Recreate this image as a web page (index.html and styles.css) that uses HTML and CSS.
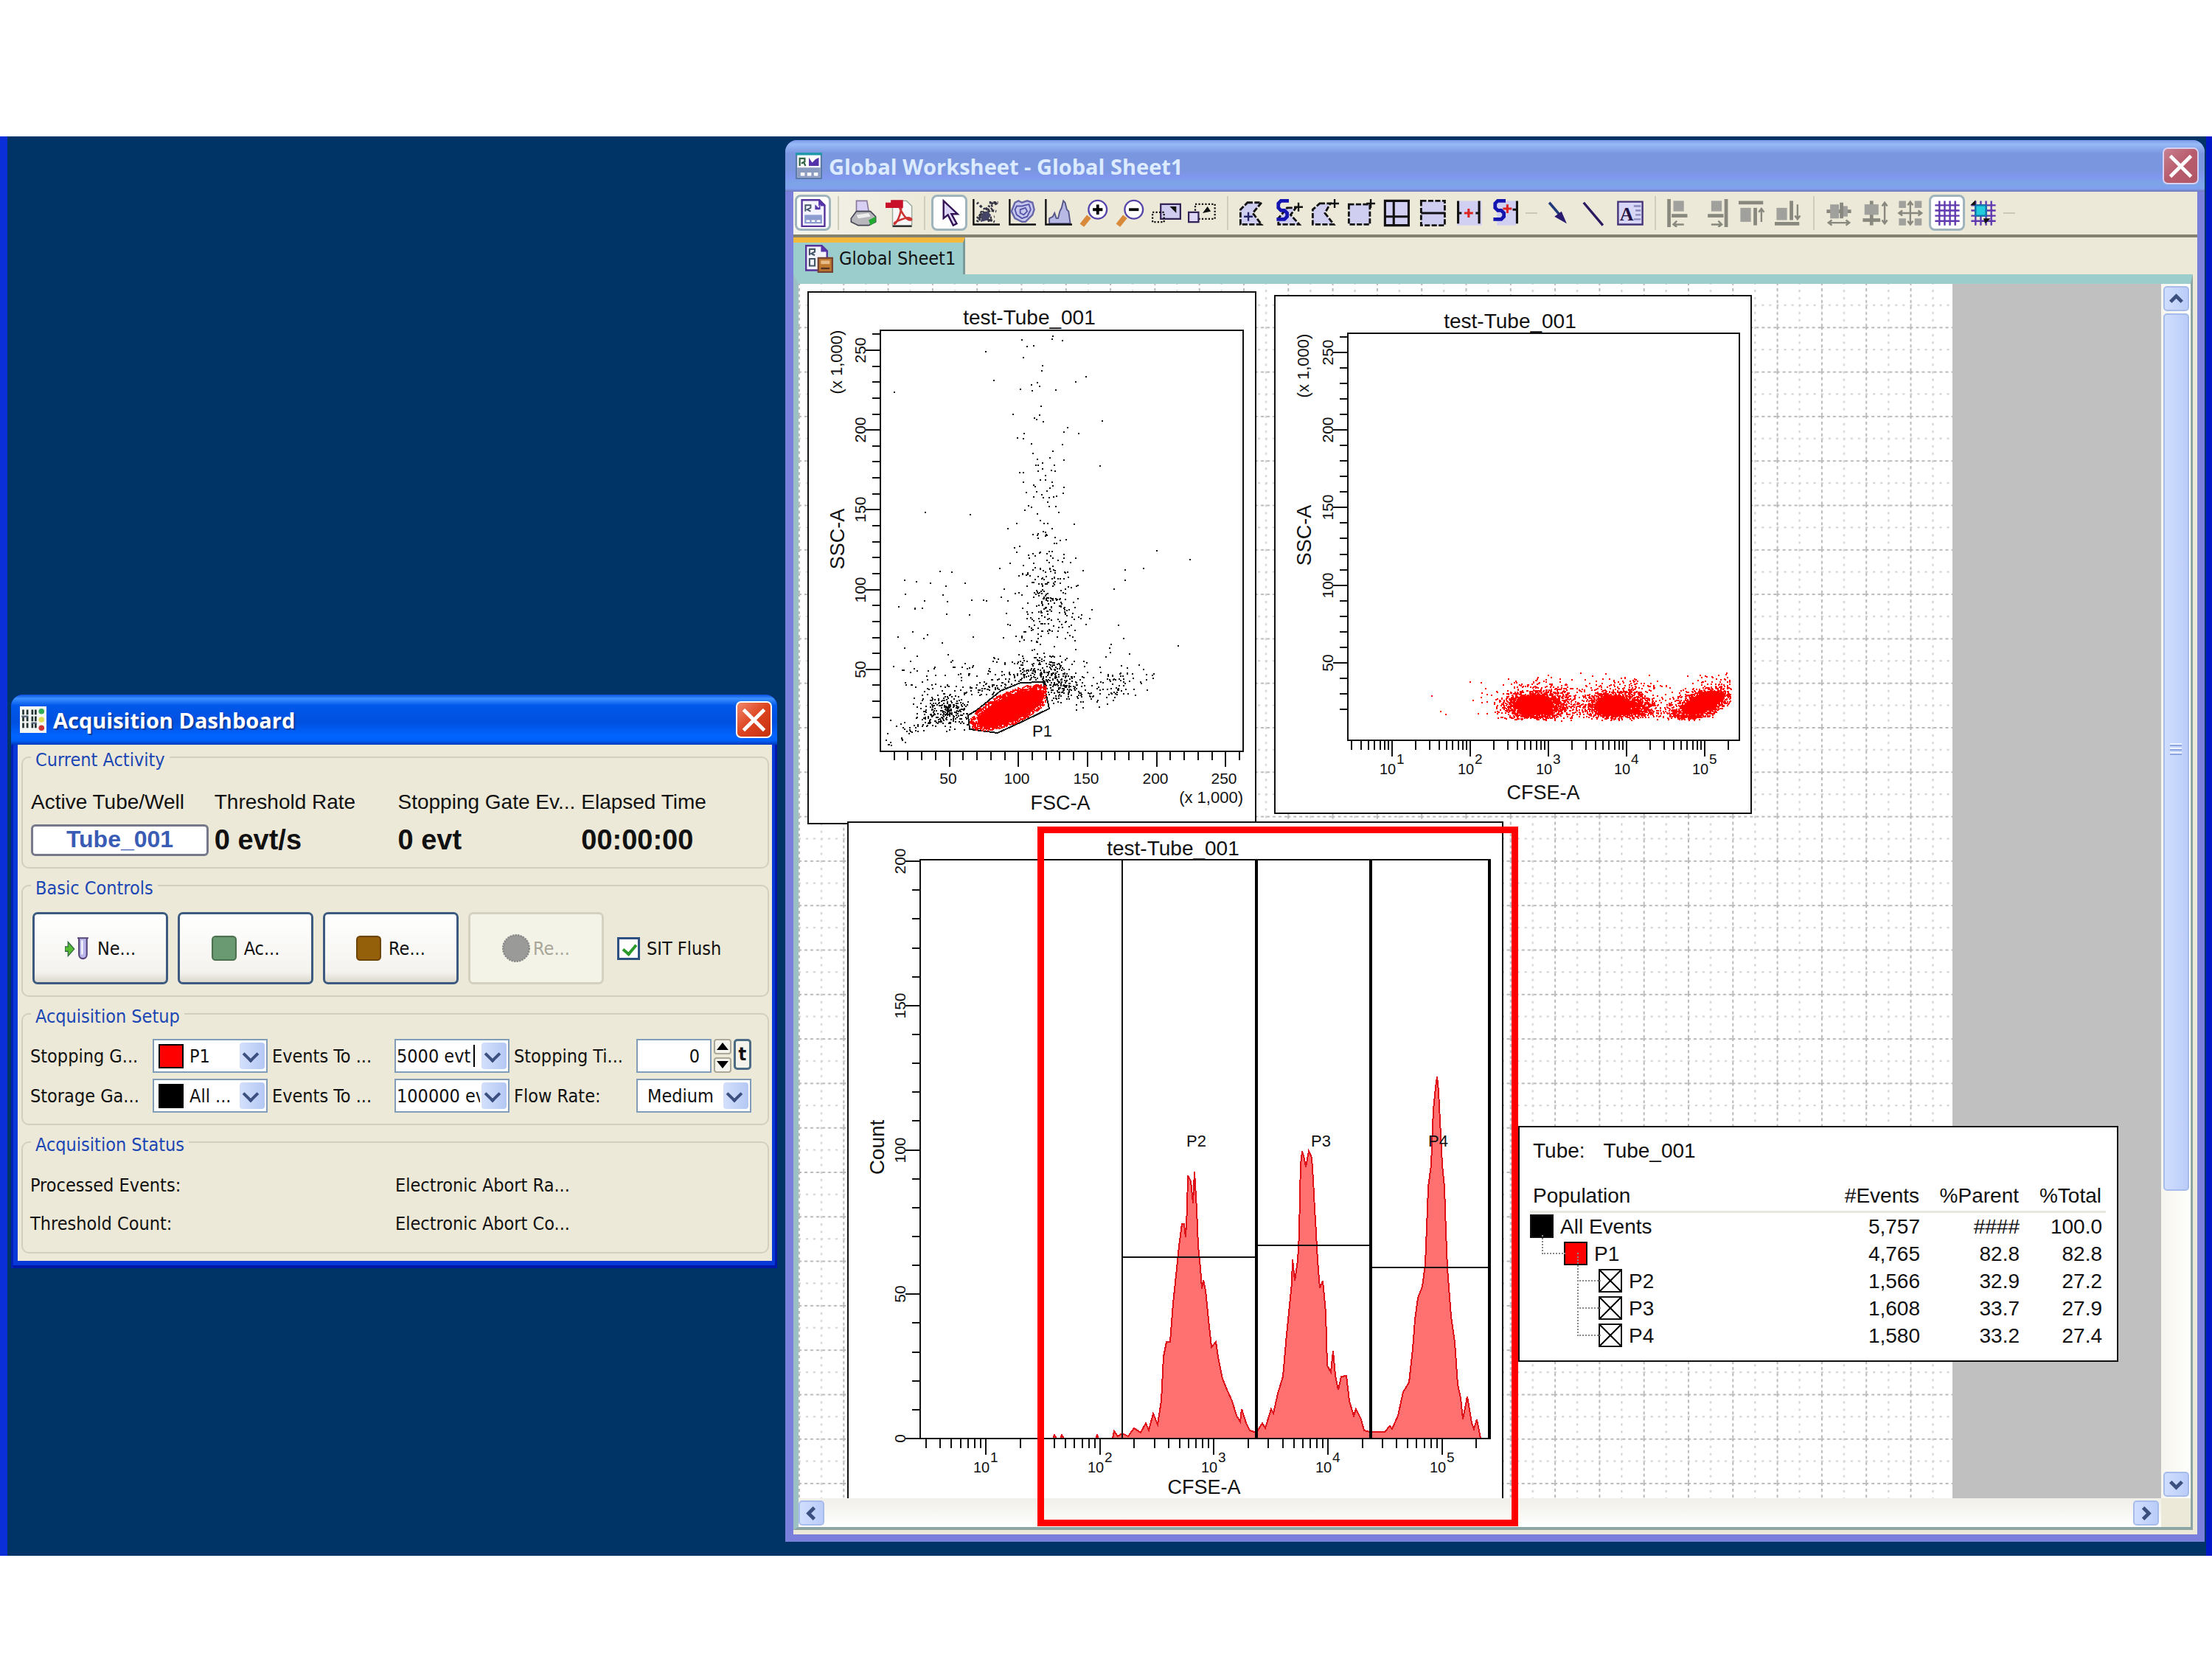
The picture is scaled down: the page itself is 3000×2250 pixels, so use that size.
FILE: index.html
```html
<!DOCTYPE html>
<html lang="en">
<head>
<meta charset="UTF-8">
<title>Global Worksheet - Global Sheet1</title>
<link rel="stylesheet" href="styles.css">
</head>
<body>

<main class="desktop">

<section class="window dashboard">
	<header class="titlebar">
		<svg class="app-icon" viewBox="0 0 16 16">
			<path fill="#f4f8f4" d="M0 0h16v16H0z" />
			<path stroke="#233" stroke-width="1.2" stroke-dasharray="3 1" fill="none" d="M2 2v12M4.500 2v12M7.500 2v12M9.500 2v12" />
			<path stroke="#567" d="M1 6h4M7 10h3" />
			<circle cx="13" cy="3" r="1.700" fill="#3a5" /><circle cx="13" cy="8" r="1.700" fill="#dd5" /><circle cx="13" cy="13" r="1.700" fill="#c33" />
		</svg>
		<h1>Acquisition Dashboard</h1>
		<button class="close" type="button" aria-label="Close"><svg viewBox="0 0 16 16"><path d="M3 3l10 10M13 3L3 13" /></svg></button>
	</header>
	<form class="client">
		<fieldset>
			<legend>Current Activity</legend>
			<dl class="activity">
				<div><dt>Active Tube/Well</dt><dd class="tube">Tube_001</dd></div>
				<div><dt>Threshold Rate</dt><dd>0 evt/s</dd></div>
				<div><dt>Stopping Gate Ev...</dt><dd>0 evt</dd></div>
				<div><dt>Elapsed Time</dt><dd>00:00:00</dd></div>
			</dl>
		</fieldset>
		<fieldset>
			<legend>Basic Controls</legend>
			<div class="controls">
				<button type="button">
					<svg viewBox="0 0 16 16"><path fill="#5b3" stroke="#364" stroke-width=".600" d="M0 7h2V4l4 4.500L2 13v-3H0z" /><path fill="#b9b6ec" stroke="#547" d="M8 1.500h7M9 2v10c0 3.500 5 3.500 5 0V2" /><path stroke="#fff" d="M11 3v9" /></svg>
					Ne...
				</button>
				<button type="button">
					<svg viewBox="0 0 16 16"><rect x=".500" y=".500" width="15" height="15" rx="2" fill="#6a9a72" stroke="#4c7250" /></svg>
					Ac...
				</button>
				<button type="button">
					<svg viewBox="0 0 16 16"><rect x=".500" y=".500" width="15" height="15" rx="2" fill="#94610a" stroke="#6e4506" /></svg>
					Re...
				</button>
				<button type="button" class="record" disabled>
					<svg viewBox="0 0 16 16"><circle cx="8" cy="8" r="7.500" fill="#9a9a98" stroke="#888" stroke-dasharray="1 .500" /></svg>
					Re...
				</button>
				<label class="check"><input type="checkbox" checked> SIT Flush</label>
			</div>
		</fieldset>
		<fieldset>
			<legend>Acquisition Setup</legend>
			<div class="setup">
				<div class="field">
					<label for="stopGate">Stopping G...</label>
					<div class="combo gate-p1"><select id="stopGate"><option>P1</option></select></div>
				</div>
				<div class="field">
					<label for="eventsRecord">Events To ...</label>
					<div class="combo caret"><input id="eventsRecord" type="text" value="5000 evt"></div>
				</div>
				<div class="field">
					<label for="stopTime">Stopping Ti...</label>
					<div class="spinner">
						<input id="stopTime" type="text" value="0">
						<span class="spin"><button type="button" aria-label="Up"></button><button type="button" aria-label="Down"></button></span>
						<button type="button" class="pin">t</button>
					</div>
				</div>
				<div class="field">
					<label for="storeGate">Storage Ga...</label>
					<div class="combo gate-all"><select id="storeGate"><option>All ...</option></select></div>
				</div>
				<div class="field">
					<label for="eventsDisplay">Events To ...</label>
					<div class="combo"><input id="eventsDisplay" type="text" value="100000 evt"></div>
				</div>
				<div class="field">
					<label for="flowRate">Flow Rate:</label>
					<div class="combo flow"><select id="flowRate"><option>Medium</option></select></div>
				</div>
			</div>
		</fieldset>
		<fieldset>
			<legend>Acquisition Status</legend>
			<div class="status">
				<span>Processed Events:</span><span>Electronic Abort Ra...</span>
				<span>Threshold Count:</span><span>Electronic Abort Co...</span>
			</div>
		</fieldset>
	</form>
</section>

<section class="window sheet">
	<header class="titlebar">
		<svg class="app-icon" viewBox="0 0 16 16">
			<path fill="#fff" stroke="#5a7aa8" d="M.500 .500h15v15H.500z" />
			<path fill="#29a" d="M0 0h16v1.500H0z" />
			<path stroke="#364" fill="none" d="M2.500 8V3.500h3v2l-2 1M5 6l1 2" /><path fill="#53a" d="M8 8V3l2 3 2-2 2-1v5z" />
			<path fill="#8c9cc0" d="M1 9h14v6H1z" /><path stroke="#fff" stroke-width="2" d="M3 13h2.500M7 13h2.500M11 13h2.500" />
		</svg>
		<h1>Global Worksheet - Global Sheet1</h1>
		<button class="close" type="button" aria-label="Close"><svg viewBox="0 0 16 16"><path d="M3 3l10 10M13 3L3 13" /></svg></button>
	</header>
	<nav class="toolbar">
		<button class="on" aria-label="Worksheet"><svg viewBox="0 0 16 16"><path fill="#f4f4ff" stroke="#539" d="M1.500 .500h10l3 3v12h-13z" /><path fill="#53a" d="M11 0v4h4zM9 6V3l2 2 1-2v3z" /><path fill="none" stroke="#456" stroke-width=".800" d="M3.500 7V3.500h3v1.500l-2 1 2 1" /><path fill="#8c9cd0" d="M3 9h10v5H3z" /><path stroke="#fff" d="M4 12.500h2M7 12.500h2M10 12.500h2" /></svg></button>
		<i></i>
		<button aria-label="Print"><svg viewBox="0 0 16 16"><path fill="#d8d0f4" stroke="#879" stroke-width=".700" d="M4 1h6l1 6H4z" /><path fill="#b8b8bc" stroke="#445" stroke-width=".700" d="M1 11l3-4h8l3 3v3l-4 2H5l-4-2z" /><path fill="#eee" d="M4 9l7-1 1 2-7 1z" /><path fill="#2a3" d="M11 12l4-2v3l-3 2z" /></svg></button>
		<button aria-label="PDF"><svg viewBox="0 0 16 16"><path fill="#f8f8f8" stroke="#9a9" stroke-width=".600" d="M4 1h8l3 3v11H4z" /><path fill="#c8102a" d="M0 2h3V.500h7V5H0z" /><path fill="none" stroke="#c33" stroke-width="1.100" d="M8 5c2 4 4 7 6 7s0-2-3-1-6 2-6 3 3-2 4-9" /><path stroke="#333" d="M4 15.500h11" /></svg></button>
		<i></i>
		<button class="on" aria-label="Select"><svg viewBox="0 0 16 16"><path fill="#ddd4f6" stroke="#315" d="M4.500 1v10l2.500-2 3 6 2-1-3-5.500h3.500z" /></svg></button>
		<button aria-label="Dot plot"><svg viewBox="0 0 16 16"><path stroke="#111" fill="none" d="M1 0v14.500h15" /><path stroke="#334" stroke-width="1.400" stroke-dasharray="1 1.300 1.500 .800" d="M3 2l3 3M10 2h5M11 4l4-2M3 11l9-9M4 12l8-7M4 9l9 4M6 12l7-2M5 7l5 5M9 6l5 1M3 13l4-6M7 5l3 8" /><path fill="#446" d="M6 8l3-1 2 2-2 3-4 1z" /></svg></button>
		<button aria-label="Contour plot"><svg viewBox="0 0 16 16"><path stroke="#111" fill="none" d="M1 0v14.500h15" /><path fill="#c8c8ee" stroke="#66a" d="M4 2l2-1 2 1 3-1 3 1 1 4-1 3-4 4H8L4 11 2 7z" /><path fill="none" stroke="#55a" stroke-width=".800" d="M5 4l3 0 4-1 1 3-2 4-3 1-3-2-1-3zM7 6l3-1 1 2-2 2-2-1z" /></svg></button>
		<button aria-label="Histogram"><svg viewBox="0 0 16 16"><path fill="#b9b9e6" stroke="#558" stroke-width=".800" d="M3 14v-3l2-1 1-2 1 3h1l1-4 1-2 1-4 1 1 1 4 1 1 1 7z" /><path stroke="#111" fill="none" d="M1 0v14.500h15" /></svg></button>
		<button aria-label="Zoom in"><svg viewBox="0 0 16 16"><path stroke="#d88a3a" stroke-width="3" d="M1 15l4-5" /><circle cx="10" cy="6" r="5.200" fill="#fff" stroke="#54a" /><path stroke="#000" stroke-width="1.600" d="M7.200 6h5.600M10 3.200v5.600" /></svg></button>
		<button aria-label="Zoom out"><svg viewBox="0 0 16 16"><path stroke="#d88a3a" stroke-width="3" d="M1 15l4-5" /><circle cx="10" cy="6" r="5.200" fill="#fff" stroke="#54a" /><path stroke="#000" stroke-width="1.600" d="M7.200 6h5.600" /></svg></button>
		<button aria-label="Enlarge"><svg viewBox="0 0 18 16"><path fill="#d0ccf0" stroke="#325" d="M5.500 2.500h12v9h-12z" /><path fill="none" stroke="#111" stroke-dasharray="1 1" d="M.500 7.500h7v6h-7z" /><path fill="#111" d="M11 4h4v4z" /></svg></button>
		<button aria-label="Reduce"><svg viewBox="0 0 18 16"><path fill="none" stroke="#111" stroke-dasharray="1 1" d="M4.500 2.500h12v9h-12z" /><path fill="#ded8f6" stroke="#325" d="M.500 7.500h6v6h-6z" /><path fill="#111" d="M9 8l3-4 2 3z" /></svg></button>
		<i></i>
		<button aria-label="Autopolygon gate"><svg viewBox="0 0 16 16"><path class="gate" d="M5 2h8L8 8l5 6.500H1V6z" /><path stroke="#226" d="M3 10h5M5.500 7.500v5" /></svg></button>
		<button aria-label="Snap-to gate"><svg viewBox="0 0 16 16"><path class="gate" d="M7 5h5L9 9l5 5.500H2V11z" /><path class="snap" d="M8 1H3.500L2 2.500V5l1.500 1.500h2L7 8v2l-1.500 1.500H1" /><path stroke="#111" d="M11 4.500h5M13.500 2v5" /></svg></button>
		<button aria-label="Polygon gate"><svg viewBox="0 0 16 16"><path class="gate" d="M5 2.500h6L8 8l5 6.500H1V6z" /><path stroke="#111" d="M11 2.500h5M13.500 0v5" /></svg></button>
		<button aria-label="Rectangle gate"><svg viewBox="0 0 16 16"><path class="gate" d="M1 3h12v11.500H1z" /><path stroke="#111" d="M11 2.500h5M13.500 0v5" /></svg></button>
		<button aria-label="Quadrant gate"><svg viewBox="0 0 16 16"><path fill="#d2d0f2" stroke="#111" stroke-width="1.300" d="M1 1h13.500v14H1zM6 1v14M1 10h13.500" /></svg></button>
		<button aria-label="Interval gate"><svg viewBox="0 0 16 16"><path class="gate" d="M1 1h13.500v14H1z" /><path stroke="#111" stroke-width="1.300" d="M1 8h13.500" /></svg></button>
		<button aria-label="Vertical interval"><svg viewBox="0 0 16 16"><path fill="#d2d0f2" d="M1 1h14v14H1z" /><path fill="none" stroke="#111" stroke-width="1.300" d="M1.500 1v13M13.500 1v13M1.500 8h2M11.500 8h2" /><path stroke="#d22" stroke-width="1.300" d="M5 8h5M7.500 5.500v5" /></svg></button>
		<button aria-label="Snap-to interval"><svg viewBox="0 0 16 16"><path fill="#d2d0f2" d="M3 1h11v14H3z" /><path class="snap" d="M8 1H3.500L2 2.500V5l1.500 1.500h2L7 8v2l-1.500 1.500H1" /><path fill="none" stroke="#111" stroke-width="1.300" d="M14.500 1v13M12 6h2" /><path stroke="#d22" stroke-width="1.300" d="M6.500 5.500h5M9 3v5" /></svg></button>
		<i class="more"></i>
		<button aria-label="Arrow"><svg viewBox="0 0 16 16"><path stroke="#213a7a" stroke-width="1.500" d="M3 2l6 7" /><path fill="#2a1a70" d="M13 14l-7-4 4-3z" /></svg></button>
		<button aria-label="Line"><svg viewBox="0 0 16 16"><path stroke="#2a1a60" stroke-width="1.400" d="M2 2l11 13" /></svg></button>
		<button aria-label="Text"><svg viewBox="0 0 16 16"><path fill="#d8d6f6" stroke="#437" d="M1 1.500h14v13H1z" /><path stroke="#88b" d="M10 4h4M11 6.500h3M11 9h3M10 11.500h4" /><text x="2" y="12" class="icon-a">A</text></svg></button>
		<i></i>
		<button aria-label="Align left"><svg viewBox="0 0 16 16"><path class="bar" d="M1.500 0v16" /><path class="box" d="M4 1h6v6H4z" /><path class="bar" d="M3 9.500h9" /><path class="arr" d="M4 14.500h6M6 12.500l-2 2 2 1.500" /></svg></button>
		<button aria-label="Align right"><svg viewBox="0 0 16 16"><path class="bar" d="M13.500 0v16" /><path class="box" d="M5 1h6v6H5z" /><path class="bar" d="M3 9.500h9" /><path class="arr" d="M5 14.500h6M9 12.500l2 2-2 1.500" /></svg></button>
		<button aria-label="Align top"><svg viewBox="0 0 16 16"><path class="bar" d="M0 2h14" /><path class="box" d="M1 5h6v8H1z" /><path class="bar" d="M9.500 5v10" /><path class="arr" d="M13 13V6M11.500 7.500l1.500-2 1.500 2" /></svg></button>
		<button aria-label="Align bottom"><svg viewBox="0 0 16 16"><path class="bar" d="M0 14h14" /><path class="box" d="M1 5h6v7H1z" /><path class="bar" d="M9.500 1v11" /><path class="arr" d="M13 3v8M11.500 9.500l1.500 2 1.500-2" /></svg></button>
		<i></i>
		<button aria-label="Distribute horizontally"><svg viewBox="0 0 16 16"><path class="bar" d="M1 7h14" /><path class="box" d="M3 3h5v8H3zM10 4h3v6h-3z" /><path class="bar" d="M9.500 2v9" /><path class="arr" d="M2 13.500h12M4 12l-2 1.500L4 15M12 12l2 1.500-2 1.500" /></svg></button>
		<button aria-label="Distribute vertically"><svg viewBox="0 0 16 16"><path class="bar" d="M6 1v14" /><path class="box" d="M2 3h8v6H2z" /><path class="bar" d="M1 12h10" /><path class="arr" d="M13.500 2v12M12 4l1.500-2L15 4M12 12l1.500 2 1.500-2" /></svg></button>
		<button aria-label="Same size"><svg viewBox="0 0 16 16"><path class="box" d="M1 1h4v4H1zM10 1h4v4h-4zM1 11h4v4H1zM10 11h4v4h-4z" /><path class="arr" d="M7.500 2v12M1 8h13M6 3.500L7.500 1.500 9 3.500M6 12.500l1.500 2 1.500-2M3 6.500L1 8l2 1.500M12 6.500L14 8l-2 1.500" /></svg></button>
		<button class="on" aria-label="Show grid"><svg viewBox="0 0 16 16"><path class="mesh" d="M3.500 1v14M6.500 1v14M9.500 1v14M12.500 1v14M1 3.500h14M1 6.500h14M1 9.500h14M1 12.500h14" /></svg></button>
		<button aria-label="Snap to grid"><svg viewBox="0 0 16 16"><path class="mesh" d="M3.500 1v14M6.500 1v14M9.500 1v14M12.500 1v14M1 3.500h14M1 6.500h14M1 9.500h14M1 12.500h14" /><path fill="#2cd" stroke="#17a" d="M3.500 3.500h6v6h-6z" /><path fill="#111" d="M.500 3.500l3-3v3zM8 11h4l-3 3z" /></svg></button>
		<i class="more"></i>
	</nav>
	<div class="tabs">
		<a href="#sheet1" class="tab">
			<svg viewBox="0 0 16 16"><path fill="#f4f4ff" stroke="#539" d="M.500 .500h9l3 3v11H.500z" /><path fill="#53a" d="M9 0v4h4z" /><path fill="none" stroke="#456" stroke-width=".900" d="M2.500 6V2.500h3v1.500l-2 1 2 1M2.500 8h3v4h-3z" /><path fill="#c07a30" stroke="#743" d="M7.500 7.500h8v8h-8z" /><path fill="#e8bc88" d="M9 9h5v2H9z" /><path fill="#532" d="M9 13h5v1H9z" /></svg>
			Global Sheet1
		</a>
	</div>
	<div class="pane" id="sheet1">
		<div class="canvas">
			<svg class="paper">
				<defs>
					<pattern id="grid" width="60.3" height="60.3" y="-2" patternUnits="userSpaceOnUse">
						<path stroke="#b8b8b8" stroke-width="2" stroke-dasharray="4 4" d="M1 0v60.300M0 1h60.300" />
						<path stroke="#ccc" stroke-width="2" stroke-dasharray="3 7" d="M31 0v60.300M0 31h60.300" />
					</pattern>
				</defs>
				<rect width="100%" height="100%" fill="url(#grid)" />
			</svg>
			<svg class="plot" id="scatter" viewBox="1095 395 609 723"></svg>
			<svg class="plot" id="cfse" viewBox="1728 400 648 704"></svg>
			<svg class="plot" id="histogram" viewBox="1149 1114 890 930"></svg>
			<div class="stats">
				<p><span>Tube:</span> <span>Tube_001</span></p>
				<table>
					<thead>
						<tr><th>Population</th><th>#Events</th><th>%Parent</th><th>%Total</th></tr>
					</thead>
					<tbody>
						<tr><td class="root"><b class="black"></b>All Events</td><td>5,757</td><td>####</td><td>100.0</td></tr>
						<tr><td class="child"><b class="red"></b>P1</td><td>4,765</td><td>82.8</td><td>82.8</td></tr>
						<tr><td class="leaf"><b></b>P2</td><td>1,566</td><td>32.9</td><td>27.2</td></tr>
						<tr><td class="leaf"><b></b>P3</td><td>1,608</td><td>33.7</td><td>27.9</td></tr>
						<tr><td class="leaf"><b></b>P4</td><td>1,580</td><td>33.2</td><td>27.4</td></tr>
					</tbody>
				</table>
			</div>
		</div>
		<div class="vscroll">
			<button aria-label="Scroll up"><svg viewBox="0 0 16 16"><path d="M4 10l4-4 4 4" /></svg></button>
			<div class="thumb"></div>
			<button aria-label="Scroll down"><svg viewBox="0 0 16 16"><path d="M4 6l4 4 4-4" /></svg></button>
		</div>
		<div class="hscroll">
			<button aria-label="Scroll left"><svg viewBox="0 0 16 16"><path d="M10 4L6 8l4 4" /></svg></button>
			<button aria-label="Scroll right"><svg viewBox="0 0 16 16"><path d="M6 4l4 4-4 4" /></svg></button>
		</div>
		<div class="highlight"></div>
	</div>
</section>

</main>

<script src="plots.js"></script>
</body>
</html>
```
FILE: styles.css
```css
* {
	box-sizing: border-box;
}
html, body {
	height: 100%;
	margin: 0;
}
body {
	background: #FFF;
	color: #111;
	display: flex;
	flex-direction: column;
	font: 25px "DejaVu Sans Condensed", "DejaVu Sans", sans-serif;
	padding: 185px 0 140px;
}
button, input, select {
	color: inherit;
	font: inherit;
	margin: 0;
}
svg {
	display: block;
	fill: none;
}
.desktop {
	background: #036;
	border-left: 10px solid #0A2FD8;
	border-right: 8px solid #0018C8;
	flex: 1;
	position: relative;
}

/* Windows */
.window {
	border-radius: 16px 16px 0 0;
	display: flex;
	flex-direction: column;
	position: absolute;
}
.dashboard {
	background: #0838D8;
	box-shadow: inset 3px 0 #0020B8, inset -3px 0 #0018A8, inset 0 -4px #0018A8;
	left: 5px;
	padding: 0 7px 10px 9px;
	top: 757px;
	width: 1039px;
}
.sheet {
	background: #7A7FDC;
	bottom: 19px;
	left: 1055px;
	padding: 0 10px 10px 11px;
	right: 2px;
	top: 5px;
}
.titlebar {
	align-items: center;
	color: #FFF;
	display: flex;
	flex: none;
	gap: 9px;
	height: 68px;
}
.dashboard .titlebar {
	background: linear-gradient(#0A50E0, #3C90FF 8%, #0058EA 22%, #0050E0 55%, #0064FF 82%, #0060F8 92%, #0038B8);
	border-radius: 16px 16px 0 0;
	margin: 0 -7px 0 -9px;
	padding: 0 7px 0 12px;
}
.sheet .titlebar {
	background: linear-gradient(#7A9AE8, #98BAF8 8%, #7A96DF 26%, #7A96DF 58%, #8096EE 70%, #7CA4E6 84%, #80A0F0 94%, #7078B8);
	border-radius: 16px 16px 0 0;
	color: #DCEBFF;
	height: 70px;
	margin: 0 -10px 0 -11px;
	padding: 0 8px 0 14px;
}
.titlebar h1 {
	flex: 1;
	font: bold 29px "Open Sans", "Noto Sans", sans-serif;
	margin: 0;
	text-shadow: 2px 2px 1px #0A3A9A;
}
.sheet h1 {
	text-shadow: none;
}
.app-icon {
	height: 36px;
	width: 36px;
}
.close {
	background: linear-gradient(135deg, #F0876A, #DD4420 50%, #C43010);
	border: 2px solid #FFF;
	border-radius: 7px;
	height: 50px;
	padding: 0;
	width: 49px;
}
.sheet .close {
	background: linear-gradient(135deg, #C88090, #B85C6C 50%, #B05868);
	border-color: #D8D0F0;
}
.close path {
	stroke: #FFF;
	stroke-width: 1.7;
}

/* Dashboard */
.client {
	background: #ECE9D8;
	padding: 1px 4px 10px 5px;
}
fieldset {
	border: 2px solid #D2CFBC;
	border-radius: 10px;
	height: 167px;
	margin: 0 0 7px;
	min-width: 0;
	padding: 0 10px 0 11px;
}
fieldset:last-child {
	margin: 0;
}
legend {
	color: #1B46B4;
	line-height: 24px;
	padding: 8px 6px 0;
}
.activity {
	display: grid;
	font-family: "Liberation Sans", sans-serif;
	font-size: 28px;
	grid-template-columns: repeat(4, 1fr);
	margin: 0 -6px 0 0;
	padding-top: 28px;
	white-space: nowrap;
}
.activity dt {
	line-height: 34px;
	margin-bottom: 13px;
}
.activity dd {
	font-size: 38px;
	font-weight: bold;
	line-height: 43px;
	margin: 0;
}
.activity .tube {
	background: #FFF;
	border: 3px solid #77788C;
	border-radius: 6px;
	color: #3A5CB4;
	font-size: 32px;
	line-height: 34px;
	height: 43px;
	text-align: center;
	width: 241px;
}
.controls {
	align-items: center;
	display: flex;
	gap: 13px;
	padding: 20px 0 0 2px;
}
.controls button {
	align-items: center;
	background: linear-gradient(#FFF, #F4F3EE 85%, #DCD8CC);
	border: 3px solid #3C5A80;
	border-radius: 7px;
	display: flex;
	gap: 10px;
	height: 98px;
	justify-content: center;
	padding: 0;
	width: 184px;
}
.controls button:disabled {
	background: #F4F3E8;
	border-color: #D4D1C0;
	color: #A8A698;
}
.controls svg {
	height: 34px;
	width: 34px;
}
.controls .record {
	gap: 4px;
}
.controls .record svg {
	height: 38px;
	width: 38px;
}
.check {
	align-items: center;
	display: flex;
	gap: 9px;
	margin-left: 5px;
}
.check input {
	appearance: none;
	background: #FFF;
	border: 3px solid #2C5080;
	height: 31px;
	position: relative;
	width: 31px;
}
.check input:checked::after {
	border: solid #2A9A2A;
	border-width: 0 4px 4px 0;
	content: "";
	height: 14px;
	left: 8px;
	position: absolute;
	top: 3px;
	transform: rotate(40deg);
	width: 8px;
}
.setup {
	display: grid;
	gap: 8px 6px;
	grid-template-columns: repeat(3, 322px);
	margin-left: -1px;
	padding-top: 18px;
}
.field {
	align-items: center;
	display: flex;
	white-space: nowrap;
}
.field label {
	flex: 1;
}
.combo, .spinner {
	height: 46px;
	position: relative;
	width: 156px;
}
.combo select, .combo input, .spinner input {
	appearance: none;
	background: #FFF;
	border: 2px solid #7F9DB9;
	border-radius: 0;
	height: 46px;
	outline: 0;
	padding: 0 38px 0 1px;
	width: 100%;
}
.combo::after {
	background: linear-gradient(90deg, #D4E0FC, #B4C8F4);
	border-radius: 4px;
	bottom: 5px;
	content: "";
	position: absolute;
	right: 4px;
	top: 5px;
	width: 34px;
}
/* Arrow of the drop-down */
.combo::before {
	border: solid #3C5080;
	border-width: 0 4px 4px 0;
	content: "";
	height: 12px;
	position: absolute;
	right: 15px;
	top: 13px;
	transform: rotate(45deg);
	width: 12px;
	z-index: 1;
}
.gate-p1 select, .gate-all select {
	background: linear-gradient(#000, #000) 6px 5px / 34px 33px no-repeat #FFF;
	padding-left: 48px;
	padding-right: 0;
}
.gate-p1 select {
	background: linear-gradient(#F00, #F00) 8px 7px / 30px 29px no-repeat, linear-gradient(#000, #000) 6px 5px / 34px 33px no-repeat #FFF;
}
.flow select {
	padding: 0 0 0 13px;
}
.caret input {
	background: linear-gradient(#000, #000) 105px 6px / 2px 30px no-repeat #FFF;
}
.spinner {
	display: flex;
	gap: 3px;
}
.spinner input {
	flex: 1;
	min-width: 0;
	padding: 0 14px 0 0;
	text-align: right;
}
.spin {
	display: grid;
	gap: 4px;
	width: 24px;
}
.spin button {
	background: #F4F3EC;
	border: 2px solid #AAA898;
	border-radius: 4px;
	padding: 0;
	position: relative;
}
.spin button::after {
	border: 8px solid transparent;
	border-bottom: 10px solid #000;
	border-top: 0;
	content: "";
	left: 2px;
	position: absolute;
	top: 3px;
}
.spin button + button::after {
	border-bottom: 0;
	border-top: 10px solid #000;
}
.pin {
	background: #F4F3EC;
	border: 3px solid #4C6C84;
	border-radius: 5px;
	height: 42px;
	line-height: 30px;
	padding: 0;
	width: 24px;
}
.spinner .pin {
	font-weight: bold;
}
.status {
	display: grid;
	grid-template-columns: 1fr 1fr;
	line-height: 52px;
	margin-left: -1px;
	padding-top: 17px;
}

/* Worksheet */
.toolbar {
	align-items: center;
	background: linear-gradient(90deg, #F4F3EA, #ECE9D8 10%);
	border-bottom: 4px solid #85816F;
	display: flex;
	flex: none;
	height: 62px;
	padding: 0 0 1px 2px;
}
.toolbar button {
	align-items: center;
	background: none;
	border: 3px solid transparent;
	border-radius: 8px;
	display: flex;
	flex: none;
	height: 49px;
	justify-content: center;
	padding: 0;
	width: 49px;
}
.toolbar .on {
	background: #FFF;
	border-color: #9FB4BC;
}
.toolbar svg {
	height: 38px;
	width: 40px;
}
.toolbar i {
	border-left: 2px solid #D0CDBC;
	flex: none;
	height: 46px;
	margin: 0 8px 0 9px;
}
.toolbar .more {
	border: 0;
	border-top: 2px solid #CCC9B8;
	height: 2px;
	margin: 0 3px;
	width: 16px;
}
.gate {
	fill: #CFCDF0;
	stroke: #111;
	stroke-dasharray: 3 1;
	stroke-width: 1.2;
}
.snap {
	stroke: #1414B0;
	stroke-width: 2;
}
.icon-a {
	fill: #214;
	font: bold 11px "Liberation Serif", serif;
}
.bar {
	stroke: #88887F;
	stroke-width: 2;
}
.box {
	fill: #A0A09C;
}
.arr {
	stroke: #88887F;
}
.mesh {
	stroke: #6038B0;
}
.tabs {
	background: #ECE9D8;
	flex: none;
	height: 50px;
}
.tab {
	align-items: center;
	background: #9CCDCD;
	border-right: 3px solid #7A9A9A;
	border-top: 7px solid #F4B83C;
	color: #111;
	display: flex;
	gap: 8px;
	height: 50px;
	padding-left: 16px;
	text-decoration: none;
	white-space: nowrap;
	width: 233px;
}
.tab svg {
	flex: none;
	height: 38px;
	width: 38px;
}
.pane {
	border: solid #9CCDCD;
	border-color: #9CCDCD #8CA4A4 #8CA4A4 #9CC0C4;
	border-width: 13px 3px 4px 7px;
	box-shadow: 0 0 0 6px #ECE9D8;
	display: grid;
	flex: 1;
	grid-template: minmax(0, 1fr) 39px / minmax(0, 1fr) 40px;
	margin: 0 6px 6px 0;
	min-height: 0;
	position: relative;
	clip-path: inset(0 -6px -6px 0);
}
.canvas {
	background: #C0C0C0;
	overflow: hidden;
	position: relative;
}
.paper {
	background: #FFF;
	height: 100%;
	width: 1565px;
}
.plot {
	background: #FFF;
	font-family: "Liberation Sans", sans-serif;
	position: absolute;
}
.plot text {
	fill: #111;
}
.plot path, .plot rect {
	shape-rendering: crispEdges;
}
#scatter {
	height: 723px;
	left: 12px;
	top: 10px;
	width: 609px;
}
#cfse {
	height: 704px;
	left: 645px;
	top: 15px;
	width: 648px;
}
#histogram {
	height: 930px;
	left: 66px;
	top: 729px;
	width: 890px;
}
.stats {
	background: #FFF;
	border: 2px solid #111;
	font: 28px "Liberation Sans", sans-serif;
	height: 320px;
	left: 976px;
	padding: 14px 15px 14px 14px;
	position: absolute;
	top: 1142px;
	width: 814px;
}
.stats p {
	display: flex;
	gap: 25px;
	line-height: 36px;
	margin: 0 0 24px 4px;
}
.stats table {
	border-collapse: collapse;
	width: 100%;
}
.stats th {
	border-bottom: 3px solid #E8E8E0;
	font-weight: normal;
	height: 40px;
	padding: 0 6px 0 4px;
	text-align: right;
}
.stats td {
	height: 37px;
	line-height: 37px;
	padding: 0 5px 0 0;
	text-align: right;
}
.stats th:first-child, .stats td:first-child {
	text-align: left;
}
.stats td:first-child {
	align-items: center;
	display: flex;
	gap: 9px;
	position: relative;
}
.stats th:nth-child(3), .stats td:nth-child(3) {
	width: 135px;
}
.stats th:nth-child(4), .stats td:nth-child(4) {
	width: 112px;
}
.stats .child {
	padding-left: 46px;
}
.stats .leaf {
	padding-left: 93px;
}
.stats b {
	background: linear-gradient(45deg, transparent 47%, #111 48%, #111 52%, transparent 53%), linear-gradient(-45deg, transparent 47%, #111 48%, #111 52%, transparent 53%);
	border: 2px solid #111;
	height: 32px;
	width: 32px;
}
.stats .black {
	background: #000;
}
.stats .red {
	background: #F00;
}
/* Dotted tree lines */
.child::before, .leaf::before {
	border: dotted #888;
	border-width: 0 0 2px 2px;
	bottom: 18px;
	content: "";
	height: 24px;
	left: 16px;
	position: absolute;
	width: 30px;
}
.leaf::before {
	height: 37px;
	left: 64px;
}
.vscroll, .hscroll {
	background: linear-gradient(90deg, #F6F5EE, #FEFEFB);
	display: flex;
	flex-direction: column;
	padding: 3px 2px 2px 3px;
}
.hscroll {
	background: linear-gradient(#F0EFE8, #FFF);
	flex-direction: row;
	justify-content: space-between;
	padding: 3px 3px 2px 0;
}
.pane::after {
	background: #ECE9D8;
	content: "";
	grid-area: 2 / 2;
}
.vscroll button, .hscroll button, .thumb {
	background: linear-gradient(90deg, #D0DEFE, #BACCF8);
	border: 2px solid #A8BCEC;
	border-radius: 5px;
	flex: none;
	height: 34px;
	padding: 0;
	width: 35px;
}
.thumb {
	flex: 0 1 1190px;
	margin: 3px 0 auto;
	position: relative;
}
/* Grip of the scroll bar */
.thumb::after {
	background: repeating-linear-gradient(#EEF4FE 0 2px, #8CA4E0 2px 4px, transparent 4px 6px);
	content: "";
	height: 18px;
	left: 7px;
	position: absolute;
	top: 49%;
	width: 16px;
}
.vscroll path, .hscroll path {
	stroke: #3C5080;
	stroke-width: 2.5;
}
.highlight {
	border: 9px solid #F00;
	height: 949px;
	left: 324px;
	position: absolute;
	top: 736px;
	width: 652px;
}
```
FILE: plots.js
```js
var NS = 'http://www.w3.org/2000/svg';

// Same events on every load
var seed = 20;
function rnd() {
	seed = (seed * 16807) % 2147483647;
	return seed / 2147483647;
}
function gauss() {
	return Math.sqrt(-2 * Math.log(rnd())) * Math.cos(2 * Math.PI * rnd());
}

function add(svg, name, attrs, text) {
	var e = document.createElementNS(NS, name);
	for (var k in attrs) e.setAttribute(k, attrs[k]);
	if (text) e.textContent = text;
	svg.appendChild(e);
	return e;
}
function line(svg, d, color, width) {
	add(svg, 'path', { d: d, stroke: color || '#111', 'stroke-width': width || 2, fill: 'none' });
}
function label(svg, x, y, text, size, anchor) {
	add(svg, 'text', { x: x, y: y, 'font-size': size, 'text-anchor': anchor || 'middle' }, text);
}
function vlabel(svg, x, y, text, size) {
	add(svg, 'text', { x: x, y: y, 'font-size': size, 'text-anchor': 'middle', transform: 'rotate(-90 ' + x + ' ' + y + ')' }, text);
}
function frame(svg, x, y, w, h) {
	add(svg, 'rect', { x: x, y: y, width: w, height: h, fill: 'none', stroke: '#111', 'stroke-width': 2 });
}
// Linear axis on the left side, one tick per 10 units
function yAxis(svg, x, zero, step, max, first) {
	var d = '';
	for (var v = first; v <= max; v += 10) {
		var y = Math.round(zero - v * step);
		d += 'M' + x + ' ' + y + 'h' + (v % 50 ? -11 : -20);
		if (v % 50 == 0) vlabel(svg, x - 20, y, '' + v, 21);
	}
	line(svg, d);
}
function logAxis(svg, y, x1, decade) {
	var d = '';
	for (var e = 0; e <= 5; e++) {
		for (var m = 1; m < 10; m++) {
			if (e == 0 && m < 3 || e == 5 && m > 2) continue;
			var x = Math.round(x1 + (e - 1 + Math.log(m) / Math.LN10) * decade);
			d += 'M' + x + ' ' + y + 'v' + (m == 1 ? 22 : 13);
			if (m == 1) {
				label(svg, x - 17, y + 46, '10', 20, 'start');
				label(svg, x + 6, y + 32, '' + e, 19, 'start');
			}
		}
	}
	line(svg, d);
}
function dots(svg, list, color) {
	var d = '';
	list.forEach(function (p) {
		d += 'M' + Math.round(p[0]) + ' ' + Math.round(p[1]) + 'h2v2h-2z';
	});
	add(svg, 'path', { d: d, fill: color });
}
function cloud(list, n, x, y, sx, sy, slope) {
	for (var i = 0; i < n; i++) {
		var g = gauss();
		list.push([x + g * sx, y + gauss() * sy - g * sx * (slope || 0)]);
	}
}

// FSC-A / SSC-A
(function () {
	var svg = document.getElementById('scatter');
	frame(svg, 1096, 396, 607, 721);
	frame(svg, 1194, 448, 492, 571);
	yAxis(svg, 1194, 1016, 2.164, 260, 20);
	var d = '';
	for (var v = 10; v <= 260; v += 10) {
		var x = Math.round(1194 + v * 1.873);
		d += 'M' + x + ' 1019v' + (v % 50 ? 12 : 21);
		if (v % 50 == 0) label(svg, x - 2, 1063, '' + v, 21);
	}
	line(svg, d);
	label(svg, 1396, 440, 'test-Tube_001', 28);
	label(svg, 1438, 1098, 'FSC-A', 27);
	label(svg, 1686, 1089, '(x 1,000)', 22, 'end');
	vlabel(svg, 1142, 491, '(x 1,000)', 22);
	vlabel(svg, 1145, 731, 'SSC-A', 27);

	var events = [], i;
	for (i = 0; i < 35; i++) events.push([1410 + gauss() * 26, 455 + rnd() * 190]);
	for (i = 0; i < 80; i++) events.push([1415 + gauss() * 18, 620 + rnd() * 170]);
	for (i = 0; i < 70; i++) events.push([1215 + rnd() * 330, 770 + rnd() * 130]);
	for (i = 0; i < 90; i++) events.push([1210 + rnd() * 240, 895 + rnd() * 40]);
	for (i = 0; i < 60; i++) events.push([1204 + i * 1.4 + gauss() * 5, 1005 - i * .7 + gauss() * 10]);
	cloud(events, 210, 1421, 820, 21, 32);
	cloud(events, 190, 1420, 912, 24, 12);
	cloud(events, 110, 1435, 935, 18, 8);
	cloud(events, 260, 1286, 962, 20, 12);
	cloud(events, 90, 1510, 930, 24, 11, .3);
	cloud(events, 90, 1345, 932, 22, 10, .4);
	events = events.filter(function (p) {
		return p[0] > 1200 && p[0] < 1680 && p[1] > 450 && p[1] < 1010 && !(p[0] > 1312 && p[0] < 1422 && p[1] > 942 && p[1] < 1000);
	});
	events.push([1212, 531], [1254, 694], [1315, 697], [1472, 510], [1494, 570], [1568, 746], [1613, 758], [1597, 875], [1550, 770], [1491, 631], [1462, 587], [1347, 515]);
	dots(svg, events, '#111');

	var gate = 'M1313 970L1325 963 1357 937 1384 926 1415 925 1423 961 1390 977 1353 994 1315 989z';
	add(svg, 'path', { d: gate, fill: '#FFF', stroke: '#111', 'stroke-width': 2 });
	add(svg, 'ellipse', { cx: 1371, cy: 961, rx: 49, ry: 17, fill: '#F00', transform: 'rotate(-24 1371 961)' });
	var p1 = [];
	for (i = 0; i < 1100; i++) {
		var a = rnd() * 2 * Math.PI, r = .7 + rnd() * .45, px = Math.cos(a) * r * 52, py = Math.sin(a) * r * 19;
		p1.push([1370 + px * .914 + py * .407, 959 - px * .407 + py * .914]);
	}
	p1 = p1.filter(function (p) { return p[0] < 1418 && p[1] > 927; });
	dots(svg, p1, '#F00');
	label(svg, 1400, 999, 'P1', 22, 'start');
})();

// CFSE-A / SSC-A
(function () {
	var svg = document.getElementById('cfse');
	frame(svg, 1729, 401, 646, 702);
	frame(svg, 1828, 452, 531, 552);
	yAxis(svg, 1828, 1004, 2.104, 260, 20);
	logAxis(svg, 1004, 1888, 106);
	label(svg, 2048, 445, 'test-Tube_001', 28);
	label(svg, 2093, 1084, 'CFSE-A', 27);
	vlabel(svg, 1775, 496, '(x 1,000)', 22);
	vlabel(svg, 1778, 726, 'SSC-A', 27);

	var events = [];
	add(svg, 'ellipse', { cx: 2081, cy: 956, rx: 26, ry: 14, fill: '#F00' });
	add(svg, 'ellipse', { cx: 2187, cy: 957, rx: 24, ry: 14, fill: '#F00' });
	add(svg, 'ellipse', { cx: 2309, cy: 953, rx: 29, ry: 12, fill: '#F00', transform: 'rotate(-24 2309 953)' });
	cloud(events, 1700, 2082, 957, 21, 10);
	cloud(events, 420, 2090, 948, 29, 14);
	cloud(events, 1300, 2188, 958, 19, 9);
	cloud(events, 420, 2220, 959, 13, 8);
	cloud(events, 420, 2200, 946, 28, 13);
	cloud(events, 1500, 2306, 956, 20, 8, .35);
	cloud(events, 450, 2308, 948, 24, 13, .4);
	events = events.filter(function (p) {
		return p[1] > 912 && p[1] < 973 + rnd() * 4 && p[0] < 2347;
	});
	events.push([1993, 924], [1941, 943], [1953, 964], [1960, 968], [2009, 952], [2014, 933], [2016, 967], [2143, 912]);
	dots(svg, events, '#F00');
})();

// CFSE-A histogram
(function () {
	var svg = document.getElementById('histogram');
	frame(svg, 1150, 1115, 888, 960);
	var counts = '1339 1951 1428 1951 1430 1946 1433 1951 1438 1951 1440 1946 1443 1951 1486 1951 1488 1946 1490 1951 1509 1951 1511 1941 1516 1948 1522 1944 1530 1948 1538 1937 1547 1943 ' +
		'1554 1930 1558 1940 1564 1917 1570 1932 1575 1900 1578 1840 1582 1820 1587 1820 1591 1768 1596 1720 1599 1690 1603 1660 1606 1660 1608 1678 1610 1640 1611 1594 1615 1602 1618 1632 ' +
		'1620 1589 1623 1640 1625 1690 1628 1720 1630 1748 1632 1736 1635 1750 1639 1790 1643 1827 1649 1820 1652 1840 1658 1870 1665 1887 1671 1900 1677 1920 1682 1928 1684 1911 1690 1930 ' +
		'1695 1940 1704 1943 1712 1930 1716 1937 1724 1911 1727 1917 1733 1890 1740 1867 1745 1810 1749 1770 1752 1740 1753 1708 1756 1737 1760 1710 1762 1675 1763 1620 1764 1580 1766 1561 ' +
		'1769 1572 1771 1583 1775 1561 1779 1570 1781 1600 1783 1640 1784 1655 1787 1710 1790 1747 1794 1737 1798 1780 1800 1852 1805 1861 1808 1832 1811 1865 1815 1885 1819 1867 1826 1866 ' +
		'1830 1900 1836 1920 1839 1911 1846 1925 1850 1940 1858 1942 1878 1942 1885 1934 1888 1938 1896 1920 1903 1888 1911 1875 1916 1830 1919 1790 1923 1760 1929 1745 1933 1715 1936 1640 ' +
		'1937 1610 1941 1580 1944 1505 1947 1475 1949 1460 1951 1480 1953 1520 1956 1580 1959 1610 1961 1670 1963 1720 1968 1785 1973 1820 1977 1878 1981 1896 1984 1925 1990 1894 1996 1930 ' +
		'1999 1938 2003 1925 2008 1951';
	add(svg, 'path', { d: 'M' + counts, fill: '#FF7070', stroke: '#E01018', 'stroke-width': 2 });
	frame(svg, 1248, 1166, 773, 785);
	yAxis(svg, 1248, 1951, 3.914, 200, 0);
	logAxis(svg, 1951, 1337, 154.7);
	// Interval gates P2 to P4
	line(svg, 'M1522 1166v785M1522 1705h181M1704 1689h154M1859 1719h161');
	line(svg, 'M1704 1166v785M1859 1166v785M2020 1166v785', '#000', 4);
	label(svg, 1609, 1555, 'P2', 22, 'start');
	label(svg, 1778, 1555, 'P3', 22, 'start');
	label(svg, 1937, 1555, 'P4', 22, 'start');
	label(svg, 1591, 1160, 'test-Tube_001', 28);
	label(svg, 1633, 2026, 'CFSE-A', 27);
	vlabel(svg, 1199, 1556, 'Count', 28);
})();
```
